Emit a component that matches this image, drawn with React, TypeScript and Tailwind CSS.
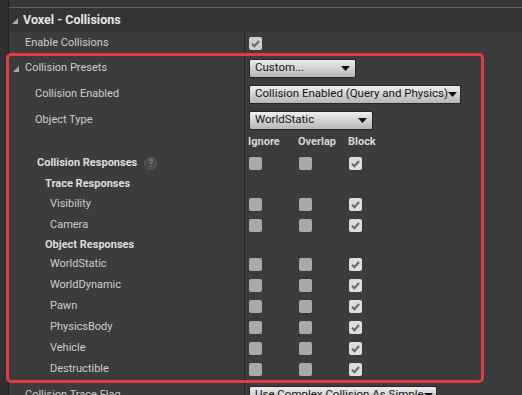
import React from "react";

const FONT = "font-['Roboto','Liberation_Sans',sans-serif]";

function Tri({ className = "" }: { className?: string }) {
  return (
    <svg width="6" height="6" viewBox="0 0 6 6" className={className}>
      <polygon points="6,0 6,6 0,6" fill="#a8a8a8" />
    </svg>
  );
}

function Check({ on, light = false }: { on?: boolean; light?: boolean }) {
  return (
    <div
      className={
        "w-[13px] h-[13px] rounded-[2px] flex items-center justify-center " +
        (on ? (light ? "bg-[#cfcfcf]" : "bg-[#dedede]") : "bg-[#a9a9a9]")
      }
    >
      {on && (
        <svg width="11" height="11" viewBox="0 0 11 11">
          <path d="M2 5.8 L4.4 8.2 L9 3" fill="none" stroke="#6b6b6b" strokeWidth="2.2" />
        </svg>
      )}
    </div>
  );
}

function Dropdown({ label, w }: { label: string; w: string }) {
  return (
    <div
      className={
        "h-[19px] flex items-center justify-between border border-[#262626] rounded-[2px] bg-linear-to-b from-[#eeeeee] to-[#b6b6b6] text-[#141414] text-[11.5px] pl-[5px] pr-[5px] " +
        w
      }
    >
      <span className="whitespace-nowrap">{label}</span>
      <svg width="9" height="5" viewBox="0 0 9 5" className="shrink-0">
        <polygon points="0,0 9,0 4.5,5" fill="#111" />
      </svg>
    </div>
  );
}

function Row({
  h,
  pl,
  label,
  bold,
  tri,
  children,
}: {
  h: string;
  pl: string;
  label: React.ReactNode;
  bold?: boolean;
  tri?: boolean;
  children?: React.ReactNode;
}) {
  return (
    <div className={"flex " + h}>
      <div
        className={
          "w-[235px] flex items-center " +
          pl +
          (bold ? " font-bold text-[#dcdcdc]" : " text-[#cdcdcd]")
        }
      >
        {tri && <Tri className="ml-[-12px] mr-[6px] mt-[1px]" />}
        {label}
      </div>
      <div className="flex-1 border-l border-[#242424] pl-[4px] flex items-center">{children}</div>
    </div>
  );
}

function Triple() {
  return (
    <div className="flex">
      <div className="w-[50px]">
        <Check />
      </div>
      <div className="w-[50px]">
        <Check />
      </div>
      <div className="w-[50px]">
        <Check on />
      </div>
    </div>
  );
}

const OBJECTS = ["WorldStatic", "WorldDynamic", "Pawn", "PhysicsBody", "Vehicle", "Destructible"];

export default function App() {
  return (
    <div className={"relative w-[522px] h-[395px] overflow-hidden bg-[#3c3c3c] flex text-[11px] " + FONT}>
      <div className="w-[9px] shrink-0 bg-[#303030] border-r border-[#222]" />
      <div className="flex-1 flex flex-col">
        <div className="h-[8px] shrink-0 bg-[#363636] border-b border-[#5e5e5e]" />
        <div className="h-[24px] shrink-0 bg-[#343434] flex items-center pl-[3px] text-[12.5px] font-bold text-[#e4e4e4]">
          <Tri className="mr-[5px] mt-[1px]" />
          Voxel - Collisions
        </div>
        <Row h="h-[23px] shrink-0" pl="pl-[16px]" label="Enable Collisions">
          <Check on light />
        </Row>
        <Row h="h-[26px] shrink-0" pl="pl-[16px]" label="Collision Presets" tri>
          <Dropdown label="Custom..." w="w-[107px]" />
        </Row>
        <Row h="h-[26px] shrink-0" pl="pl-[26px]" label="Collision Enabled">
          <Dropdown label="Collision Enabled (Query and Physics)" w="w-[212px]" />
        </Row>
        <Row h="h-[26px] shrink-0" pl="pl-[26px]" label="Object Type">
          <Dropdown label="WorldStatic" w="w-[124px]" />
        </Row>
        <Row h="h-[19px] shrink-0" pl="pl-[26px]" label="">
          <div className="flex font-bold text-[#d6d6d6] -ml-[1px]">
            <span className="w-[50px]">Ignore</span>
            <span className="w-[50px]">Overlap</span>
            <span className="w-[50px]">Block</span>
          </div>
        </Row>
        <Row
          h="h-[22px] shrink-0"
          pl="pl-[28px]"
          bold
          label={
            <>
              Collision Responses
              <span className="ml-[7px] w-[13px] h-[13px] rounded-full bg-[#4a4a4a] border border-[#5c5c5c] text-[#7c7c7c] text-[10px] font-bold flex items-center justify-center">
                ?
              </span>
            </>
          }
        >
          <Triple />
        </Row>
        <Row h="h-[20px] shrink-0" pl="pl-[36px]" bold label="Trace Responses" />
        <Row h="h-[21px] shrink-0" pl="pl-[41px]" label="Visibility">
          <Triple />
        </Row>
        <Row h="h-[21px] shrink-0" pl="pl-[41px]" label="Camera">
          <Triple />
        </Row>
        <Row h="h-[18px] shrink-0" pl="pl-[36px]" bold label="Object Responses" />
        {OBJECTS.map((o) => (
          <Row key={o} h="h-[21px] shrink-0" pl="pl-[41px]" label={o}>
            <Triple />
          </Row>
        ))}
        <Row h="h-[3px] shrink-0" pl="pl-[16px]" label="" />
        <Row h="h-[24px] shrink-0" pl="pl-[16px]" label="Collision Trace Flag">
          <Dropdown label="Use Complex Collision As Simple" w="w-[188px]" />
        </Row>
      </div>
      <div className="absolute left-[6px] top-[53px] w-[478px] h-[330px] border-[3px] border-[#e53b3e] rounded-[5px] pointer-events-none" />
    </div>
  );
}
